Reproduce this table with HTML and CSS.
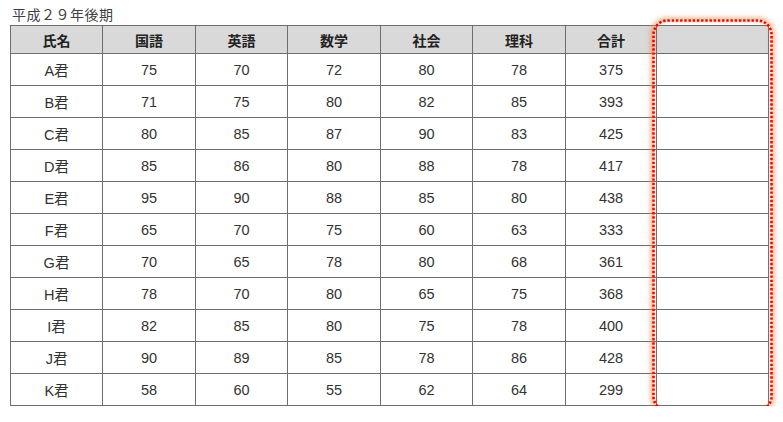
FILE: index.html
```html
<!DOCTYPE html>
<html lang="ja">
<head>
<meta charset="utf-8">
<link rel="stylesheet" href="styles.css">
</head>
<body>
<div class="page">
  <div class="title">平成２９年後期</div>
  <div class="wrap">
    <table class="scores">
      <colgroup>
        <col class="c1"><col class="c2"><col class="c3"><col class="c4"><col class="c5"><col class="c6"><col class="c7"><col class="c8">
      </colgroup>
      <thead>
        <tr><th>氏名</th><th>国語</th><th>英語</th><th>数学</th><th>社会</th><th>理科</th><th>合計</th><th></th></tr>
      </thead>
      <tbody>
        <tr><td>A君</td><td>75</td><td>70</td><td>72</td><td>80</td><td>78</td><td>375</td><td></td></tr>
        <tr><td>B君</td><td>71</td><td>75</td><td>80</td><td>82</td><td>85</td><td>393</td><td></td></tr>
        <tr><td>C君</td><td>80</td><td>85</td><td>87</td><td>90</td><td>83</td><td>425</td><td></td></tr>
        <tr><td>D君</td><td>85</td><td>86</td><td>80</td><td>88</td><td>78</td><td>417</td><td></td></tr>
        <tr><td>E君</td><td>95</td><td>90</td><td>88</td><td>85</td><td>80</td><td>438</td><td></td></tr>
        <tr><td>F君</td><td>65</td><td>70</td><td>75</td><td>60</td><td>63</td><td>333</td><td></td></tr>
        <tr><td>G君</td><td>70</td><td>65</td><td>78</td><td>80</td><td>68</td><td>361</td><td></td></tr>
        <tr><td>H君</td><td>78</td><td>70</td><td>80</td><td>65</td><td>75</td><td>368</td><td></td></tr>
        <tr><td>I君</td><td>82</td><td>85</td><td>80</td><td>75</td><td>78</td><td>400</td><td></td></tr>
        <tr><td>J君</td><td>90</td><td>89</td><td>85</td><td>78</td><td>86</td><td>428</td><td></td></tr>
        <tr><td>K君</td><td>58</td><td>60</td><td>55</td><td>62</td><td>64</td><td>299</td><td></td></tr>
      </tbody>
    </table>
    <div class="highlight">
      <svg class="dots" width="121" height="393" viewBox="0 0 121 393">
        <rect x="1.5" y="1.5" width="118" height="390" rx="14" ry="14" fill="none" stroke="#ff0000" stroke-width="2.6" stroke-dasharray="2.4 1.8"/>
      </svg>
    </div>
  </div>
</div>
</body>
</html>
```
FILE: styles.css
```css
html, body {
  margin: 0;
  padding: 0;
  background: #fff;
}
.page {
  font-family: "Noto Sans CJK JP", "Noto Sans", sans-serif;
  color: #333;
  padding: 4px 0 0 12px;
}
.title {
  font-size: 14px;
  line-height: 20px;
  color: #404040;
  letter-spacing: 0.5px;
}
.wrap {
  position: relative;
  margin-top: 1px;
  margin-left: -2px;
}
.scores {
  border-collapse: collapse;
  table-layout: fixed;
  width: 758px;
  font-size: 14px;
}
.c1 { width: 92px; }
.c2 { width: 93px; }
.c3 { width: 92px; }
.c4 { width: 93px; }
.c5 { width: 92px; }
.c6 { width: 93px; }
.c7 { width: 91px; }
.c8 { width: 112px; }
.scores th, .scores td {
  border: 1px solid #6e6e6e;
  text-align: center;
  padding: 0;
  font-family: "Noto Sans CJK JP", "Liberation Sans", sans-serif;
}
.scores th {
  background: #d9d9d9;
  height: 27px;
  font-weight: bold;
  color: #222;
  font-size: 14px;
}
.scores td {
  height: 31px;
  color: #333;
  font-family: "Liberation Sans", "Noto Sans CJK JP", sans-serif;
  font-size: 14.5px;
}
.highlight {
  position: absolute;
  left: 642px;
  top: -6px;
  width: 121px;
  height: 393px;
  border-radius: 15px;
  box-shadow: 0 0 4px 2px rgba(255, 130, 50, 0.5), inset 0 0 4px 2px rgba(255, 130, 50, 0.45);
}
.dots {
  display: block;
}
```
